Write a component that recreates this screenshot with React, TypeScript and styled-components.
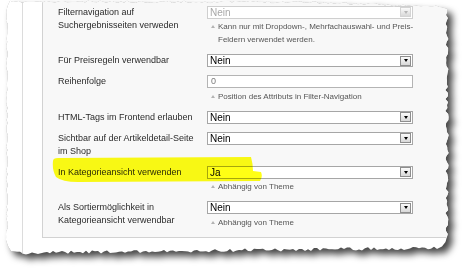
import styled, { createGlobalStyle } from "styled-components";

const GlobalStyle = createGlobalStyle`
    html, body {
        margin: 0;
        padding: 0;
        background: #fff;
    }
    body {
        width: 465px;
        height: 268px;
        overflow: hidden;
        font-family: "Liberation Sans", Arial, sans-serif;
    }
`;

// torn paper outline, seeded so it is the same on every load
const tornEdge = (() => {
    let seed = 11;
    const rand = () => {
        seed = (seed * 16807) % 2147483647;
        return (seed - 1) / 2147483646;
    };
    const pts: string[] = [];
    const push = (x: number, y: number) =>
        pts.push(`${x.toFixed(1)}px ${y.toFixed(1)}px`);

    for (let x = 10; x <= 443; x += 3) {
        const base = x < 300 ? 2 : 2 + ((x - 300) / 146) * 5;
        push(x, base + (rand() - 0.5) * 2.4);
    }
    for (let y = 9; y <= 236; y += 3) push(447 + (rand() - 0.5) * 3.4, y);
    push(445.5, 242);
    push(442, 246.5);
    for (let x = 437; x >= 16; x -= 3) {
        const base = 248 + ((437 - x) / 421) * 5;
        push(x, base + (rand() - 0.5) * 3.4);
    }
    push(11, 251);
    push(8, 246);
    for (let y = 240; y >= 9; y -= 3) push(7 + (rand() - 0.5) * 2, y);
    push(8, 5);
    return `polygon(${pts.join(", ")})`;
})();

const Stage = styled.div`
    position: relative;
    width: 465px;
    height: 268px;
    overflow: hidden;
`;

const PaperShadow = styled.div`
    filter: drop-shadow(0 0 0.6px rgba(0, 0, 0, 0.35))
        drop-shadow(5px 5px 3.5px rgba(0, 0, 0, 0.72));
`;

const Paper = styled.div`
    width: 465px;
    height: 268px;
    background: #fff;
    clip-path: ${tornEdge};
    display: flex;
    align-items: flex-start;
`;

const SideCol = styled.div`
    flex: none;
    width: 22px;
    height: 268px;
    border-right: 1px solid #dcdcdc;
`;

const MainCol = styled.div`
    flex: 1;
    padding-left: 19px;
`;

const Fieldset = styled.div`
    background: #f8f8f8;
    border-left: 1px solid #d2d2d2;
    border-bottom: 1px solid #d2d2d2;
    padding: 5.5px 0 0 15px;
`;

const Row = styled.div`
    display: flex;
    align-items: flex-start;
    padding-bottom: 8px;
`;

const Label = styled.div`
    flex: none;
    width: 140px;
    margin-right: 9px;
    font-size: 9px;
    line-height: 13px;
    color: #2b2b2b;
`;

const Value = styled.div`
    flex: none;
    width: 206px;
`;

const SelectBox = styled.div<{ $disabled?: boolean }>`
    box-sizing: border-box;
    height: 13px;
    display: flex;
    align-items: center;
    justify-content: space-between;
    padding: 0 1px 0 2px;
    background: #fff;
    border: 1px solid ${p => (p.$disabled ? "#cfcfcf" : "#a6a6a6")};
    font-size: 10px;
    line-height: 11px;
    color: ${p => (p.$disabled ? "#a8a8a8" : "#000")};
`;

const DropButton = styled.div<{ $disabled?: boolean }>`
    box-sizing: border-box;
    width: 11px;
    height: 10px;
    display: flex;
    align-items: center;
    justify-content: center;
    border: 1px solid ${p => (p.$disabled ? "#d4d4d4" : "#8e8e8e")};
    background: linear-gradient(#fbfbfb, #d8d8d8);

    &::after {
        content: "";
        border-left: 2.5px solid transparent;
        border-right: 2.5px solid transparent;
        border-top: 3px solid ${p => (p.$disabled ? "#b5b5b5" : "#000")};
    }
`;

const InputBox = styled.div`
    box-sizing: border-box;
    height: 13px;
    padding-left: 3px;
    background: #fff;
    border: 1px solid #b4b4b4;
    font-size: 9px;
    line-height: 11px;
    color: #7a7a7a;
`;

const Note = styled.div`
    position: relative;
    margin-top: 1.5px;
    padding-left: 11px;
    font-size: 8px;
    line-height: 13px;
    white-space: nowrap;
    color: #555;

    &::before {
        content: "";
        position: absolute;
        left: 4px;
        top: 5px;
        border-left: 2.5px solid transparent;
        border-right: 2.5px solid transparent;
        border-bottom: 3px solid #b3b3b3;
    }
`;

const Highlight = styled.svg`
    position: absolute;
    left: 0;
    top: 0;
    pointer-events: none;
    mix-blend-mode: multiply;
`;

const Select = ({ value, disabled }: { value: string; disabled?: boolean }) => (
    <SelectBox $disabled={disabled}>
        <span>{value}</span>
        <DropButton $disabled={disabled} />
    </SelectBox>
);

const App = () => {
    return (
        <Stage>
            <GlobalStyle />
            <PaperShadow>
                <Paper>
                    <SideCol />
                    <MainCol>
                        <Fieldset>
                            <Row>
                                <Label>Filternavigation auf Suchergebnisseiten verweden</Label>
                                <Value>
                                    <Select value="Nein" disabled />
                                    <Note>
                                        Kann nur mit Dropdown-, Mehrfachauswahl- und Preis-
                                        <br />
                                        Feldern verwendet werden.
                                    </Note>
                                </Value>
                            </Row>
                            <Row>
                                <Label>Für Preisregeln verwendbar</Label>
                                <Value>
                                    <Select value="Nein" />
                                </Value>
                            </Row>
                            <Row>
                                <Label>Reihenfolge</Label>
                                <Value>
                                    <InputBox>0</InputBox>
                                    <Note>Position des Attributs in Filter-Navigation</Note>
                                </Value>
                            </Row>
                            <Row>
                                <Label>HTML-Tags im Frontend erlauben</Label>
                                <Value>
                                    <Select value="Nein" />
                                </Value>
                            </Row>
                            <Row>
                                <Label>Sichtbar auf der Artikeldetail-Seite im Shop</Label>
                                <Value>
                                    <Select value="Nein" />
                                </Value>
                            </Row>
                            <Row>
                                <Label>In Kategorieansicht verwenden</Label>
                                <Value>
                                    <Select value="Ja" />
                                    <Note>Abhängig von Theme</Note>
                                </Value>
                            </Row>
                            <Row>
                                <Label>Als Sortiermöglichkeit in Kategorieansicht verwendbar</Label>
                                <Value>
                                    <Select value="Nein" />
                                    <Note>Abhängig von Theme</Note>
                                </Value>
                            </Row>
                        </Fieldset>
                    </MainCol>
                </Paper>
            </PaperShadow>
            <Highlight width="465" height="268" viewBox="0 0 465 268">
                <path
                    d="M53,161 Q53,158 58,158 L251,157 Q253,164 253,171 L261,172 Q263,177 260,181 L78,182 Q62,182 56,177 Q52,170 53,161 Z"
                    fill="#ffff14"
                />
            </Highlight>
        </Stage>
    );
};

export default App;
